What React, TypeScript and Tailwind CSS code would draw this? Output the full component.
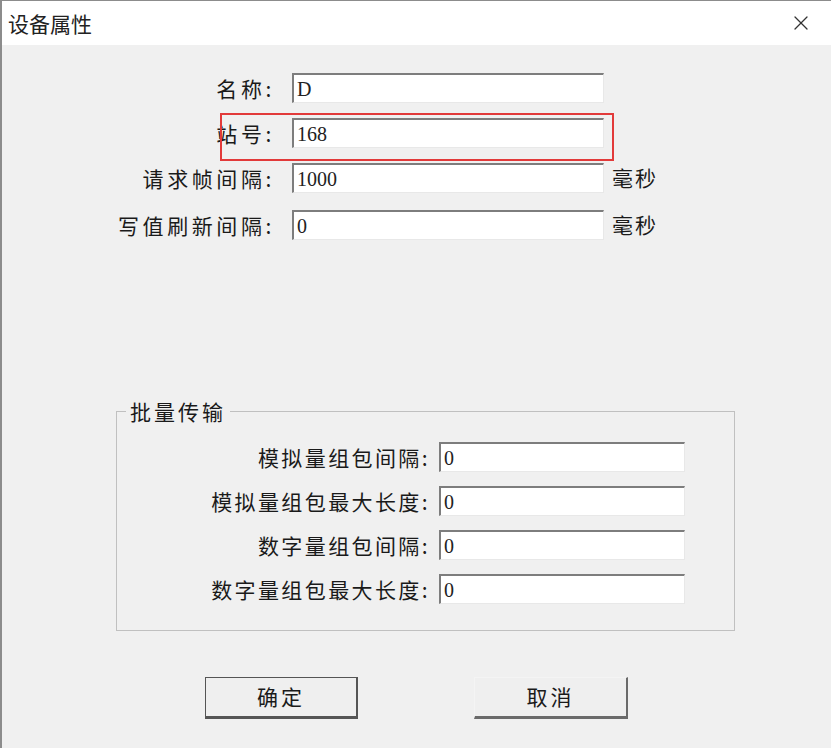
import { X } from "lucide-react";

const TOP_ROWS = [
  { label: "名称:", value: "D", unit: "" },
  { label: "站号:", value: "168", unit: "", marked: true },
  { label: "请求帧间隔:", value: "1000", unit: "毫秒" },
  { label: "写值刷新间隔:", value: "0", unit: "毫秒" },
];

const BATCH_ROWS = [
  { label: "模拟量组包间隔:", value: "0" },
  { label: "模拟量组包最大长度:", value: "0" },
  { label: "数字量组包间隔:", value: "0" },
  { label: "数字量组包最大长度:", value: "0" },
];

const cjk = "font-['Noto_Sans_CJK_SC',sans-serif]";

function Field({ value, w }: { value: string; w: string }) {
  return (
    <div
      className={`${w} h-[30px] bg-white border-t-2 border-l-2 border-t-[#7d7d7d] border-l-[#7d7d7d] border-b border-r border-b-[#e8e8e8] border-r-[#e8e8e8] flex items-center pl-[3px] text-[20px] text-[#222] font-['Liberation_Serif',serif]`}
    >
      {value}
    </div>
  );
}

export default function App() {
  return (
    <div className={`w-[831px] h-[748px] bg-[#f0f0f0] border-l-2 border-t border-[#8c8c8c] flex flex-col ${cjk}`}>
      {/* title bar */}
      <div className="h-[44px] bg-white flex items-center justify-between pl-[6px] pr-[18px] shrink-0">
        <span className="text-[21px] text-[#222] leading-none">设备属性</span>
        <X size={24} strokeWidth={1.3} className="text-[#333]" />
      </div>

      {/* main fields */}
      <div className="pt-[28px] flex flex-col gap-[15px]">
        {TOP_ROWS.map((r, i) => (
          <div key={r.label} className={`relative flex items-center h-[30px] ${i === 3 ? "mt-[2px]" : ""}`}>
            <div className="w-[273px] text-right text-[21px] tracking-[3.6px] text-[#1a1a1a] leading-none">{r.label}</div>
            <div className="ml-[17px]">
              <Field value={r.value} w="w-[312px]" />
            </div>
            {r.unit && <span className="ml-[8px] text-[21px] tracking-[2px] text-[#1a1a1a]">{r.unit}</span>}
            {r.marked && (
              <div className="absolute left-[218px] top-[-5px] w-[394px] h-[48px] border-2 border-[#e23a3a]" />
            )}
          </div>
        ))}
      </div>

      {/* batch group */}
      <fieldset className="ml-[114px] mt-[161px] w-[619px] h-[230px] border border-[#c0c0c0] px-0 pt-[20px]">
        <legend className="ml-[9px] px-[4px] text-[21px] tracking-[3px] text-[#1a1a1a] leading-none">批量传输</legend>
        <div className="flex flex-col gap-[14px]">
          {BATCH_ROWS.map((r) => (
            <div key={r.label} className="flex items-center h-[30px]">
              <div className="w-[313px] text-right text-[21px] tracking-[2.4px] text-[#1a1a1a] leading-none">{r.label}</div>
              <div className="ml-[9px]">
                <Field value={r.value} w="w-[246px]" />
              </div>
            </div>
          ))}
        </div>
      </fieldset>

      {/* buttons */}
      <div className="mt-[46px] flex pl-[203px] gap-[116px]">
        <button className="w-[153px] h-[42px] bg-[#efefef] border border-[#555] border-b-[3px] border-r-[2px] text-[21px] tracking-[3px] text-[#1a1a1a]">
          确定
        </button>
        <button className="w-[154px] h-[42px] bg-[#efefef] border border-t-[#f4f4f4] border-l-[#f4f4f4] border-b-[3px] border-r-[2px] border-b-[#6a6a6a] border-r-[#6a6a6a] text-[21px] tracking-[3px] text-[#1a1a1a]">
          取消
        </button>
      </div>
    </div>
  );
}
